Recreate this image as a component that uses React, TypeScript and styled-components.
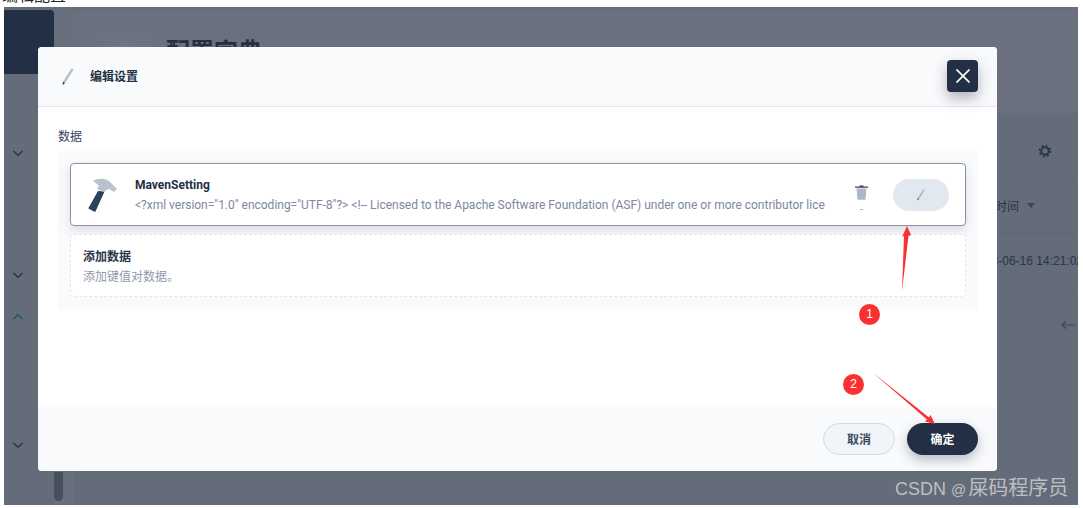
import React from "react";
import styled, { createGlobalStyle } from "styled-components";

const Global = createGlobalStyle`
  html, body { margin: 0; padding: 0; background: #fff; width: 1083px; height: 508px; overflow: hidden; }
  * { box-sizing: border-box; }
  body { font-family: Inter, "Noto Sans CJK SC", "Liberation Sans", sans-serif; }
`;

const Page = styled.div`
  position: relative;
  width: 1083px;
  height: 508px;
  overflow: hidden;
  padding: 7px 5px 3px 4px;
`;
const CutTitle = styled.div`
  position: absolute;
  left: 2px;
  top: -14px;
  font-size: 16px;
  line-height: 18px;
  color: #222;
`;
const Stage = styled.div`
  position: relative;
  display: flex;
  width: 100%;
  height: 100%;
  background: #646b79;
  overflow: hidden;
`;
const Side = styled.div`
  width: 50px;
  flex: none;
  display: flex;
  flex-direction: column;
  align-items: center;
  padding-top: 3px;
`;
const SideLogo = styled.div`
  width: 50px;
  height: 64px;
  background: #232f45;
  border-radius: 0 4px 4px 0;
  margin-bottom: 73px;
`;
const Chev = styled.div<{ $gap: number; $color?: string }>`
  width: 100%;
  height: 12px;
  margin-bottom: ${(p) => p.$gap}px;
  color: ${(p) => p.$color || "#2b3548"};
  display: flex;
  justify-content: flex-start;
  svg { margin-left: 7px; display: block; }
`;
const Rail = styled.div`
  width: 20px;
  flex: none;
  display: flex;
  flex-direction: column;
  justify-content: flex-end;
  background: #676e7c;
`;
const Pill = styled.div`
  width: 9px;
  height: 29px;
  border-radius: 0 0 5px 5px;
  background: #484f5f;
  margin-bottom: 4px;
`;
const Content = styled.div`
  flex: 1;
  display: flex;
  flex-direction: column;
  min-width: 0;
`;
const Hero = styled.div`
  height: 104px;
  flex: none;
  margin-top: 2px;
  background: #6a707e;
  border-radius: 4px 0 0 0;
  display: flex;
  align-items: flex-start;
  padding: 23px 0 0 23px;
  gap: 13px;
`;
const HeroBadge = styled.div`
  width: 56px;
  height: 50px;
  border-radius: 4px;
  background: #6b7280;
  display: flex;
  justify-content: center;
  padding-top: 10px;
  &::before {
    content: "";
    width: 32px;
    height: 32px;
    border-radius: 50%;
    background: #6f7685;
  }
`;
const HeroTitle = styled.div`
  font-size: 24px;
  line-height: 32px;
  font-weight: 700;
  color: #232f45;
  margin-top: 4px;
`;
const TablePanel = styled.div`
  flex: 1;
  display: flex;
  flex-direction: column;
  align-items: flex-end;
  color: #2b3548;
`;
const Gear = styled.div`
  width: 100%;
  height: 65px;
  display: flex;
  justify-content: flex-end;
  padding: 31px 26px 0 0;
  border-bottom: 1px solid #5f6674;
`;
const ColHead = styled.div`
  width: 100%;
  height: 55px;
  display: flex;
  justify-content: flex-end;
  align-items: center;
  gap: 8px;
  padding-right: 43px;
  font-size: 12px;
  color: #2b3548;
  border-bottom: 1px solid #5f6674;
`;
const Caret = styled.span`
  width: 0;
  height: 0;
  border-left: 4px solid transparent;
  border-right: 4px solid transparent;
  border-top: 5px solid #3a4456;
`;
const Cell = styled.div`
  width: 100%;
  height: 57px;
  border-bottom: 1px solid #5f6674;
  display: flex;
  justify-content: flex-end;
  align-items: center;
`;
const CellText = styled.span`
  flex: none;
  margin-right: -5px;
  white-space: nowrap;
  font-family: "Liberation Sans", sans-serif;
  font-size: 12px;
  line-height: 16px;
  color: #2b3548;
`;
const Pager = styled.div`
  padding: 30px 3px 0 0;
  color: #3c4658;
  svg { display: block; }
`;

const Modal = styled.div`
  position: absolute;
  left: 34px;
  top: 40px;
  width: 959px;
  height: 424px;
  background: #fff;
  border-radius: 4px;
  display: flex;
  flex-direction: column;
  overflow: hidden;
`;
const Header = styled.div`
  height: 60px;
  flex: none;
  background: #f9fafc;
  border-bottom: 1px solid #e2e8f0;
  display: flex;
  align-items: center;
  padding: 0 19px 0 24px;
`;
const HeaderTitle = styled.div`
  margin-left: 16px;
  font-size: 12px;
  font-weight: 700;
  color: #232f45;
  flex: 1;
  margin-top: -2px;
`;
const CloseBtn = styled.button`
  width: 31px;
  height: 32px;
  border: 0;
  padding: 0;
  border-radius: 4px;
  background: #232f45;
  color: #fff;
  display: flex;
  align-items: center;
  justify-content: center;
  box-shadow: 0 6px 14px rgba(35, 47, 69, 0.35);
  margin-top: -2px;
`;
const Body = styled.div`
  flex: 1;
  padding: 21px 19px 0 20px;
`;
const FieldLabel = styled.div`
  font-size: 12px;
  line-height: 17px;
  color: #36435c;
  margin-bottom: 6px;
`;
const DataBox = styled.div`
  height: 158px;
  background: #f9fafc;
  padding: 12px;
  display: flex;
  flex-direction: column;
  gap: 8px;
`;
const DataRow = styled.div`
  height: 63px;
  flex: none;
  background: #fff;
  border: 1px solid #8a92a3;
  border-radius: 4px;
  box-shadow: 0 4px 10px rgba(35, 47, 69, 0.15);
  display: flex;
  align-items: center;
  padding: 0 16px 0 13px;
`;
const RowIcon = styled.div`
  width: 51px;
  flex: none;
  display: flex;
  padding-left: 4px;
`;
const RowText = styled.div`
  flex: 1;
  min-width: 0;
  font-family: Roboto, sans-serif;
`;
const RowName = styled.div`
  font-size: 12px;
  font-weight: 700;
  line-height: 16px;
  color: #232f45;
`;
const RowDesc = styled.div`
  margin-top: 4px;
  font-size: 12px;
  letter-spacing: -0.012px;
  line-height: 16px;
  color: #7d889d;
  white-space: nowrap;
  overflow: hidden;
`;
const TrashWrap = styled.div`
  width: 32px;
  margin: 0 16px 0 12px;
  display: flex;
  flex-direction: column;
  align-items: center;
  padding-top: 6px;
  gap: 9px;
`;
const Dash = styled.div`
  width: 3px;
  height: 1px;
  background: #a9b2c0;
`;
const EditBtn = styled.button`
  width: 56px;
  height: 32px;
  border: 0;
  padding: 0;
  border-radius: 16px;
  background: #e2e8f0;
  display: flex;
  align-items: center;
  justify-content: center;
`;
const AddRow = styled.div`
  height: 63px;
  flex: none;
  background: #fff;
  border: 1px dashed #e2e7ee;
  border-radius: 4px;
  padding: 14px 12px;
`;
const AddTitle = styled.div`
  font-size: 12px;
  line-height: 16px;
  font-weight: 700;
  color: #2a3548;
`;
const AddDesc = styled.div`
  margin-top: 4px;
  font-size: 12px;
  line-height: 16px;
  color: #8f99aa;
`;
const Footer = styled.div`
  height: 64px;
  flex: none;
  background: #f9fafc;
  display: flex;
  justify-content: flex-end;
  align-items: center;
  gap: 12px;
  padding: 0 19px;
`;
const Btn = styled.button<{ $primary?: boolean }>`
  width: ${(p) => (p.$primary ? 71 : 72)}px;
  height: 32px;
  border-radius: 16px;
  font: inherit;
  font-size: 12px;
  font-weight: 700;
  padding: 0 0 2px;
  color: ${(p) => (p.$primary ? "#fff" : "#3c4a61")};
  background: ${(p) => (p.$primary ? "#232f45" : "#f1f5f9")};
  border: ${(p) => (p.$primary ? "0" : "1px solid #d5dce6")};
  box-shadow: ${(p) => (p.$primary ? "0 5px 12px rgba(35,47,69,.3)" : "none")};
`;
const Marks = styled.svg`
  position: absolute;
  left: 0;
  top: 0;
  pointer-events: none;
`;
const Badge = styled.div<{ $x: number; $y: number }>`
  position: absolute;
  left: ${(p) => p.$x}px;
  top: ${(p) => p.$y}px;
  width: 21px;
  height: 21px;
  border-radius: 50%;
  background: #fb3030;
  color: #fff;
  font-size: 12px;
  line-height: 21px;
  text-align: center;
  font-family: "Liberation Sans", sans-serif;
`;
const Watermark = styled.div`
  position: absolute;
  left: 895px;
  top: 475px;
  font-size: 18px;
  line-height: 26px;
  white-space: nowrap;
  font-family: "Liberation Sans", "Noto Sans CJK SC", sans-serif;
  color: rgba(225, 225, 225, 0.72);
`;
const WaterAt = styled.span`
  font-size: 15px;
  margin-right: 2px;
`;
const WaterName = styled.span`
  font-size: 20px;
`;

const ChevDown = () => (
  <svg width="14" height="12" viewBox="0 0 14 12" fill="none" stroke="currentColor" strokeWidth="1.5">
    <path d="M2.5 4l4.5 4.2L11.5 4" />
  </svg>
);
const ChevUp = () => (
  <svg width="14" height="12" viewBox="0 0 14 12" fill="none" stroke="currentColor" strokeWidth="1.5">
    <path d="M2.5 8l4.5-4.2L11.5 8" />
  </svg>
);
const Pen = ({ w, color }: { w: number; color: string }) => (
  <svg width={w} height={w * 1.5} viewBox="0 0 12 18">
    <path d="M9.6 0.3L11.6 1.5 3 15 1 13.800z" fill={color} />
    <path d="M1 13.800L3 15 .6 17.300z" fill="#232f45" />
  </svg>
);
const Hammer = () => (
  <svg width="30" height="34" viewBox="0 0 30 34">
    <path d="M10 13l6.500 .5L7.500 33.500c-.3.400-.7.400-1.100.200L.8 30.800c-.4-.3-.5-.6-.2-1z" fill="#2c4258" />
    <path d="M4.700 3C9 .8 13 .3 17 1.200c4 1 6.500 4 8.500 6.500l3.500 3-3 3.300-3.500-2.200c-1.800-.8-3.300-.6-4.700.6L16 14l-7-3 1.500-2c.5-1-.3-2.300-2-3.500C7.300 4.500 6 3.700 4.700 3z" fill="#b9c3cf" />
  </svg>
);
const Trash = () => (
  <svg width="13" height="15" viewBox="0 0 13 15">
    <path d="M0 1.500h13v1.300H0zM4.500 .5h4v1h-4z" fill="#3a475c" />
    <path d="M1.500 3.500h10l-.9 10.200c0 .6-.5 1-1.100 1H3.500c-.6 0-1.100-.4-1.100-1z" fill="#aeb8c5" />
  </svg>
);
const GearIcon = () => (
  <svg width="14" height="14" viewBox="0 0 14 14" fill="none" stroke="#2b3548">
    <circle cx="7" cy="7" r="3.800" strokeWidth="2" />
    <circle cx="7" cy="7" r="5.600" strokeWidth="1.600" strokeDasharray="2 2.400" />
  </svg>
);

export default function App() {
  return (
    <Page>
      <Global />
      <CutTitle>编辑配置</CutTitle>
      <Stage>
        <Side>
          <SideLogo />
          <Chev $gap={110}><ChevDown /></Chev>
          <Chev $gap={30}><ChevDown /></Chev>
          <Chev $gap={116} $color="#1f5a55"><ChevUp /></Chev>
          <Chev $gap={0}><ChevDown /></Chev>
        </Side>
        <Rail><Pill /></Rail>
        <Content>
          <Hero>
            <HeroBadge />
            <HeroTitle>配置字典</HeroTitle>
          </Hero>
          <TablePanel>
            <Gear><GearIcon /></Gear>
            <ColHead>时间<Caret /></ColHead>
            <Cell><CellText>2023-06-16 14:21:02</CellText></Cell>
            <Pager>
              <svg width="14" height="10" viewBox="0 0 14 10" fill="none" stroke="currentColor" strokeWidth="1.200">
                <path d="M14 5H1M5 1.500L1 5l4 3.500" />
              </svg>
            </Pager>
          </TablePanel>
        </Content>
        <Modal>
          <Header>
            <Pen w={12} color="#b4c0ce" />
            <HeaderTitle>编辑设置</HeaderTitle>
            <CloseBtn aria-label="关闭">
              <svg width="14" height="14" viewBox="0 0 14 14" stroke="#fff" strokeWidth="1.700">
                <path d="M.5.5l13 13M13.500.5l-13 13" />
              </svg>
            </CloseBtn>
          </Header>
          <Body>
            <FieldLabel>数据</FieldLabel>
            <DataBox>
              <DataRow>
                <RowIcon><Hammer /></RowIcon>
                <RowText>
                  <RowName>MavenSetting</RowName>
                  <RowDesc>{'<?xml version="1.0" encoding="UTF-8"?> <!-- Licensed to the Apache Software Foundation (ASF) under one or more contributor lice'}</RowDesc>
                </RowText>
                <TrashWrap><Trash /><Dash /></TrashWrap>
                <EditBtn aria-label="编辑"><Pen w={8} color="#a9b4c3" /></EditBtn>
              </DataRow>
              <AddRow>
                <AddTitle>添加数据</AddTitle>
                <AddDesc>添加键值对数据。</AddDesc>
              </AddRow>
            </DataBox>
          </Body>
          <Footer>
            <Btn>取消</Btn>
            <Btn $primary>确定</Btn>
          </Footer>
        </Modal>
      </Stage>
      <Marks width="1083" height="508" viewBox="0 0 1083 508">
        <path d="M902 291L904 236 902 237 907 226 911 235 908.500 236z" fill="#fb3030" />
        <path d="M872 372L929 417.500 930.500 415 935 424 925 421.500 927 419.500z" fill="#fb3030" />
      </Marks>
      <Badge $x={859} $y={304}>1</Badge>
      <Badge $x={843} $y={374}>2</Badge>
      <Watermark>CSDN <WaterAt>@</WaterAt><WaterName>屎码程序员</WaterName></Watermark>
    </Page>
  );
}
